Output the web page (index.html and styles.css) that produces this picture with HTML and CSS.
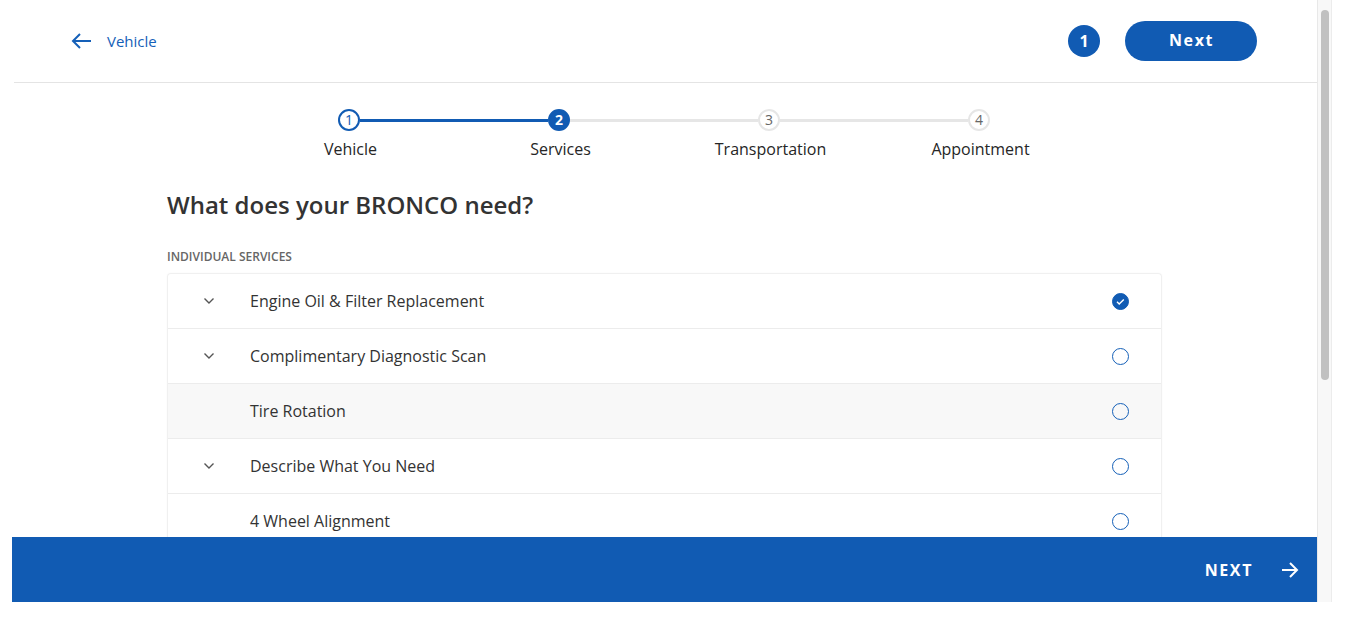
FILE: index.html
```html
<!DOCTYPE html>
<html lang="en">
<head>
<meta charset="utf-8">
<title>Services</title>
<link rel="stylesheet" href="styles.css">
</head>
<body>
<div class="app">
  <div class="frame">
    <header class="topbar">
      <a class="back" href="#">
        <svg class="back-icon" viewBox="0 0 24 24" width="24" height="24"><path d="M21 12H3.5M10 5l-7 7 7 7" fill="none" stroke="currentColor" stroke-width="2"/></svg>
        <span>Vehicle</span>
      </a>
      <div class="top-actions">
        <span class="badge">1</span>
        <button class="next-pill">Next</button>
      </div>
    </header>
    <main class="content">
      <div class="stepper">
        <div class="track">
          <span class="dot done">1</span>
          <span class="line active"></span>
          <span class="dot current">2</span>
          <span class="line"></span>
          <span class="dot">3</span>
          <span class="line"></span>
          <span class="dot">4</span>
        </div>
        <div class="labels">
          <span>Vehicle</span>
          <span>Services</span>
          <span>Transportation</span>
          <span>Appointment</span>
        </div>
      </div>
      <section class="services">
        <h1 class="title">What does your BRONCO need?</h1>
        <div class="section-label">INDIVIDUAL SERVICES</div>
        <ul class="list">
          <li class="row">
            <span class="chev"><svg viewBox="0 0 12 8" width="12" height="8"><path d="M1.5 1.5l4.5 4.5 4.5-4.5" fill="none" stroke="currentColor" stroke-width="1.4"/></svg></span>
            <span class="name">Engine Oil &amp; Filter Replacement</span>
            <span class="radio checked"><svg viewBox="0 0 17 17" width="17" height="17"><path d="M5 8.8l2.2 2.2 4.6-4.6" fill="none" stroke="#fff" stroke-width="1.4"/></svg></span>
          </li>
          <li class="row">
            <span class="chev"><svg viewBox="0 0 12 8" width="12" height="8"><path d="M1.5 1.5l4.5 4.5 4.5-4.5" fill="none" stroke="currentColor" stroke-width="1.4"/></svg></span>
            <span class="name">Complimentary Diagnostic Scan</span>
            <span class="radio"></span>
          </li>
          <li class="row shaded">
            <span class="chev"></span>
            <span class="name">Tire Rotation</span>
            <span class="radio"></span>
          </li>
          <li class="row">
            <span class="chev"><svg viewBox="0 0 12 8" width="12" height="8"><path d="M1.5 1.5l4.5 4.5 4.5-4.5" fill="none" stroke="currentColor" stroke-width="1.4"/></svg></span>
            <span class="name">Describe What You Need</span>
            <span class="radio"></span>
          </li>
          <li class="row">
            <span class="chev"></span>
            <span class="name">4 Wheel Alignment</span>
            <span class="radio"></span>
          </li>
        </ul>
      </section>
    </main>
    <footer class="bottombar">
      <button class="next-bar">
        <span>NEXT</span>
        <svg viewBox="0 0 24 24" width="24" height="24"><path d="M4 12h15M12 5l7 7-7 7" fill="none" stroke="currentColor" stroke-width="2"/></svg>
      </button>
    </footer>
  </div>
  <div class="scrollbar"><div class="thumb"></div></div>
</div>
</body>
</html>
```
FILE: styles.css
```css
* { box-sizing: border-box; }
html, body { margin: 0; padding: 0; background: #fff; }
body {
  font-family: "Open Sans", "Noto Sans", sans-serif;
  color: #333;
  height: 620px;
  overflow: hidden;
}
.app {
  display: flex;
  margin-left: 12px;
  height: 602px;
  width: 1320px;
}
.frame {
  width: 1305px;
  height: 602px;
  display: flex;
  flex-direction: column;
  background: #fff;
}
.topbar {
  height: 83px;
  flex: none;
  display: flex;
  align-items: center;
  justify-content: space-between;
  padding: 0 60px 1px 56px;
  border-bottom: 1px solid #e4e4e4;
  margin-left: 2px;
}
.back {
  display: flex;
  align-items: center;
  gap: 13px;
  color: #1560b8;
  text-decoration: none;
  font-size: 15px;
  margin-top: 1px;
}
.back-icon { color: #1560b8; }
.top-actions {
  display: flex;
  align-items: center;
  gap: 25px;
}
.badge {
  width: 32px;
  height: 32px;
  border-radius: 50%;
  background: #115bb3;
  color: #fff;
  font-weight: 700;
  font-size: 16px;
  display: flex;
  align-items: center;
  justify-content: center;
}
.next-pill {
  width: 132px;
  height: 40px;
  border: 0;
  border-radius: 20px;
  background: #115bb3;
  color: #fff;
  font-family: inherit;
  font-size: 16px;
  font-weight: 700;
  letter-spacing: 1.6px;
  padding: 0 0 2px 1px;
}
.content {
  flex: 1;
  overflow: hidden;
  padding-top: 26px;
}
.stepper {
  display: flex;
  flex-direction: column;
  align-items: center;
}
.track {
  width: 652px;
  display: flex;
  align-items: center;
  margin-left: -1px;
}
.dot {
  width: 22px;
  height: 22px;
  border-radius: 50%;
  border: 2px solid #e6e6e6;
  background: #fff;
  color: #666;
  font-size: 14px;
  display: flex;
  align-items: center;
  justify-content: center;
  flex: none;
  line-height: 1;
}
.dot.done { border-color: #115bb3; color: #115bb3; }
.dot.current { background: #115bb3; border-color: #115bb3; color: #fff; font-weight: 700; }
.line {
  flex: 1;
  height: 3px;
  background: #e6e6e6;
}
.line.active { background: #115bb3; }
.labels {
  display: grid;
  grid-template-columns: repeat(4, 210px);
  margin-top: 7px;
  margin-left: 2px;
  font-size: 16px;
  line-height: 22px;
  color: #262626;
  text-align: center;
}
.services {
  width: 995px;
  margin: 0 auto;
}
.title {
  margin: 29px 0 0;
  font-size: 24px;
  line-height: 32px;
  font-weight: 600;
  color: #333;
}
.section-label {
  margin-top: 28px;
  font-size: 12px;
  line-height: 16px;
  font-weight: 600;
  color: #666;
}
.list {
  list-style: none;
  margin: 8px 0 0;
  padding: 0;
  border: 1px solid #f0f0f0;
  border-bottom: 0;
  border-radius: 4px 4px 0 0;
  box-shadow: 0 0 2px rgba(0,0,0,0.04);
}
.row {
  height: 55px;
  display: flex;
  align-items: center;
  border-bottom: 1px solid #ececec;
  font-size: 16px;
  color: #333;
}
.row.shaded { background: #f8f8f8; }
.chev {
  width: 82px;
  padding-left: 35px;
  color: #555;
  display: flex;
  align-items: center;
}
.name { flex: 1; }
.radio {
  width: 17px;
  height: 17px;
  border-radius: 50%;
  border: 1.5px solid #1560b8;
  margin-right: 32px;
  display: flex;
  align-items: center;
  justify-content: center;
}
.radio.checked { background: #115bb3; border-color: #115bb3; }
.radio.checked svg { margin: -1.5px; }
.bottombar {
  height: 65px;
  flex: none;
  background: #115bb3;
  display: flex;
  justify-content: flex-end;
  align-items: center;
  padding-right: 15px;
}
.next-bar {
  display: flex;
  align-items: center;
  gap: 25px;
  background: none;
  border: 0;
  color: #fff;
  font-family: inherit;
  font-size: 16px;
  font-weight: 700;
  letter-spacing: 1.6px;
  padding: 0;
}
.scrollbar {
  width: 15px;
  height: 602px;
  background: #f8f8f8;
  border-left: 1px solid #e8e8e8;
  border-right: 1px solid #ececec;
  padding: 10px 3px 0 3px;
}
.thumb {
  width: 8px;
  height: 370px;
  border-radius: 4px;
  background: #c1c1c1;
}
```
